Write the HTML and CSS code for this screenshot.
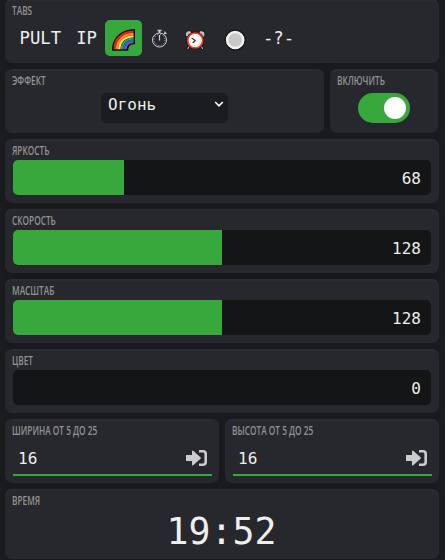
FILE: index.html
```html
<!DOCTYPE html>
<html lang="ru">
<head>
  <meta charset="UTF-8">
  <meta name="viewport" content="width=device-width, initial-scale=1.0">
  <title>Лампа</title>
  <link rel="stylesheet" href="styles.css">
</head>
<body>
  <div class="panel">
    <div class="card">
      <div class="label">TABS</div>
      <div class="tabs">
        <div class="tab">PULT</div>
        <div class="tab">IP</div>
        <div class="tab active">
          <svg class="emoji" width="23" height="22" viewBox="0 0 24 24" preserveAspectRatio="none" fill="none">
            <path d="M0 23.800C0 10 9 .2 24 0V16.500C19 16.500 17 18.500 17 23.800Z" fill="#111"/>
            <path d="M2.800 22.200C2.800 11 10 3.200 22.500 2.900" stroke="#e8202c" stroke-width="2.600"/>
            <path d="M5.200 22.200C5.200 12.500 11.500 5.800 22.500 5.400" stroke="#ff8a1f" stroke-width="2.500"/>
            <path d="M7.700 22.200C7.700 14 13 8.400 22.500 8" stroke="#ffe14a" stroke-width="2.500"/>
            <path d="M10.100 22.200C10.100 15.500 14.500 10.800 22.500 10.300" stroke="#2fa84a" stroke-width="2.200"/>
            <path d="M12.200 22.200C12.200 16.500 16 12.700 22.500 12.300" stroke="#1769f0" stroke-width="2.200"/>
            <path d="M14.300 22.200C14.300 17.500 17.500 14.500 22.500 14.200" stroke="#8252a5" stroke-width="2"/>
          </svg>
        </div>
        <div class="tab">
          <svg class="stopwatch" width="19" height="19" viewBox="-1 0 19 19" fill="none" stroke="#d0d0d0">
            <circle cx="8.500" cy="11" r="7" stroke-width="1"/>
            <circle cx="8.500" cy="11" r="5.500" stroke-width="1" stroke-dasharray=".8 2.080"/>
            <path d="M8.500 6V11.500" stroke-width="1.200"/>
            <path d="M6.500 1.500H10.500M8.500 1V4" stroke-width="1.500"/>
            <path d="M13 5L14.500 3.500M13.300 2.600L15.500 4.800" stroke-width="1.100"/>
          </svg>
        </div>
        <div class="tab">
          <svg class="emoji" width="24.500" height="22" viewBox="-.2 0 24.500 22">
            <path d="M5 17L3.200 20.500M17 17L18.800 20.500" stroke="#111" stroke-width="3"/>
            <path d="M5 17L3.500 20M17 17L18.500 20" stroke="#bbb" stroke-width="1.200"/>
            <path d="M1.500 7C.3 3.500 3 .8 6.800 2L7.500 4.500L3 8.500ZM20.500 7C21.700 3.500 19 .8 15.200 2L14.500 4.500L19 8.500Z" fill="#b9c1c7" stroke="#111"/>
            <circle cx="11" cy="11.500" r="9" fill="#111"/>
            <circle cx="11" cy="11.500" r="7.500" fill="#fff" stroke="#f03a24" stroke-width="1.700"/>
            <circle cx="11" cy="11.500" r="5.200" fill="none" stroke="#aaa" stroke-width=".8" stroke-dasharray=".8 1.920"/>
            <path d="M7.500 9L11 11.500L8.500 14" fill="none" stroke="#333" stroke-width="1.200"/>
          </svg>
        </div>
        <div class="tab">
          <svg class="emoji" width="24.500" height="22" viewBox="-1.200 0 24.500 22">
            <circle cx="11" cy="11" r="9.900" fill="#f2f2f2" stroke="#111" stroke-width="1.100"/>
            <circle cx="11" cy="11" r="7.300" fill="#ddd"/>
            <circle cx="11" cy="11" r="6.300" fill="#c8c8c8"/>
          </svg>
        </div>
        <div class="tab">-?-</div>
      </div>
    </div>

    <div class="row">
      <div class="card effect">
        <div class="label">ЭФФЕКТ</div>
        <div class="select">
          <span>Огонь</span>
          <svg width="10" height="7" viewBox="0 0 10 7" fill="none" stroke="#fff" stroke-width="1.600"><path d="M1.200 1L5 4.800L8.800 1"/></svg>
        </div>
      </div>
      <div class="card power">
        <div class="label">ВКЛЮЧИТЬ</div>
        <div class="switch"><div class="knob"></div></div>
      </div>
    </div>

    <div class="card">
      <div class="label">ЯРКОСТЬ</div>
      <div class="slider">
        <div class="fill" style="width: 26.600%"></div>
        <span class="value">68</span>
      </div>
    </div>
    <div class="card">
      <div class="label">СКОРОСТЬ</div>
      <div class="slider">
        <div class="fill" style="width: 50%"></div>
        <span class="value">128</span>
      </div>
    </div>
    <div class="card">
      <div class="label">МАСШТАБ</div>
      <div class="slider">
        <div class="fill" style="width: 50%"></div>
        <span class="value">128</span>
      </div>
    </div>
    <div class="card">
      <div class="label">ЦВЕТ</div>
      <div class="slider">
        <div class="fill" style="width: 0%"></div>
        <span class="value">0</span>
      </div>
    </div>

    <div class="row">
      <div class="card half">
        <div class="label">ШИРИНА ОТ 5 ДО 25</div>
        <div class="input">
          <span>16</span>
          <svg width="21" height="16" viewBox="0 0 21 16">
            <path d="M0 5H6V1.500Q6-.3 7.500 1L14.500 7.200Q15.300 8 14.500 8.800L7.500 15Q6 16.300 6 14.500V11H0Z" fill="#ccc"/>
            <path d="M13 1.300H17Q19.700 1.300 19.700 4V12Q19.700 14.700 17 14.700H13" fill="none" stroke="#ccc" stroke-width="2.600"/>
          </svg>
        </div>
      </div>
      <div class="card half">
        <div class="label">ВЫСОТА ОТ 5 ДО 25</div>
        <div class="input">
          <span>16</span>
          <svg width="21" height="16" viewBox="0 0 21 16">
            <path d="M0 5H6V1.500Q6-.3 7.500 1L14.500 7.200Q15.300 8 14.500 8.800L7.500 15Q6 16.300 6 14.500V11H0Z" fill="#ccc"/>
            <path d="M13 1.300H17Q19.700 1.300 19.700 4V12Q19.700 14.700 17 14.700H13" fill="none" stroke="#ccc" stroke-width="2.600"/>
          </svg>
        </div>
      </div>
    </div>

    <div class="card clock">
      <div class="label">ВРЕМЯ</div>
      <div class="time">19:52</div>
    </div>
  </div>
</body>
</html>
```
FILE: styles.css
```css
* {
  margin: 0;
  padding: 0;
  box-sizing: border-box;
}

body {
  background: #1b1c1f;
  color: #eee;
  font-family: 'DejaVu Sans Mono', monospace;
  font-size: 16px;
  height: 560px;
  overflow: hidden;
}

svg {
  display: block;
}

.panel {
  display: flex;
  flex-direction: column;
  gap: 6px;
  width: 434px;
  margin: -1px 0 0 5px;
}

.row {
  display: flex;
  gap: 6px;
}

.card {
  height: 64px;
  background: #27282d;
  border-radius: 7px;
  box-shadow: inset 0 2px 0 #2b2c30, 0 0 6px rgba(0, 0, 0, 0.15);
  padding: 4px 8px 0;
}

.label {
  height: 17px;
  margin-left: -1px;
  line-height: 15px;
  color: #929292;
  font-family: 'Open Sans', sans-serif;
  font-size: 12px;
  font-weight: 600;
  white-space: nowrap;
  transform: scaleX(0.69);
  transform-origin: left;
}

.tabs {
  display: flex;
  align-items: center;
  gap: 1px;
  height: 36px;
}

.tab {
  display: flex;
  align-items: center;
  justify-content: center;
  height: 36px;
  padding: 0 7.5px 0 6.5px;
  font-size: 17.3px;
}

.tab.active {
  padding: 0 7px;
  background: #37a93c;
  border-radius: 5px;
}

.emoji {
  margin-top: 3px;
}

.stopwatch {
  margin-top: 1px;
}

.effect {
  width: 319px;
}

.power {
  width: 108px;
}

.select {
  display: flex;
  justify-content: space-between;
  width: 127px;
  height: 30px;
  margin: 3px auto 0;
  padding: 0 4px 0 7px;
  background: #1b1c1f;
  border-radius: 5px;
  line-height: 23px;
}

.select svg {
  margin-top: 8px;
}

.switch {
  display: flex;
  align-items: center;
  justify-content: flex-end;
  width: 52px;
  height: 30px;
  margin: 3px auto 0;
  padding-right: 4px;
  background: #37a93c;
  border-radius: 15px;
}

.knob {
  width: 22px;
  height: 22px;
  background: #fff;
  border-radius: 50%;
}

.slider {
  display: flex;
  justify-content: space-between;
  height: 35px;
  background: #141517;
  border-radius: 5px;
  overflow: hidden;
}

.fill {
  background: #37a93c;
}

.value {
  padding-right: 10px;
  line-height: 38px;
}

.half {
  width: 214px;
}

.half .input {
  width: 199px;
}

.input {
  display: flex;
  justify-content: space-between;
  height: 36px;
  padding: 0 5px;
  border-bottom: 2px solid #37a93c;
  line-height: 38px;
}

.input svg {
  margin-top: 10px;
}

.clock {
  height: 70px;
}

.time {
  padding-right: 1px;
  line-height: 43px;
  font-size: 36.5px;
  text-align: center;
}
```
